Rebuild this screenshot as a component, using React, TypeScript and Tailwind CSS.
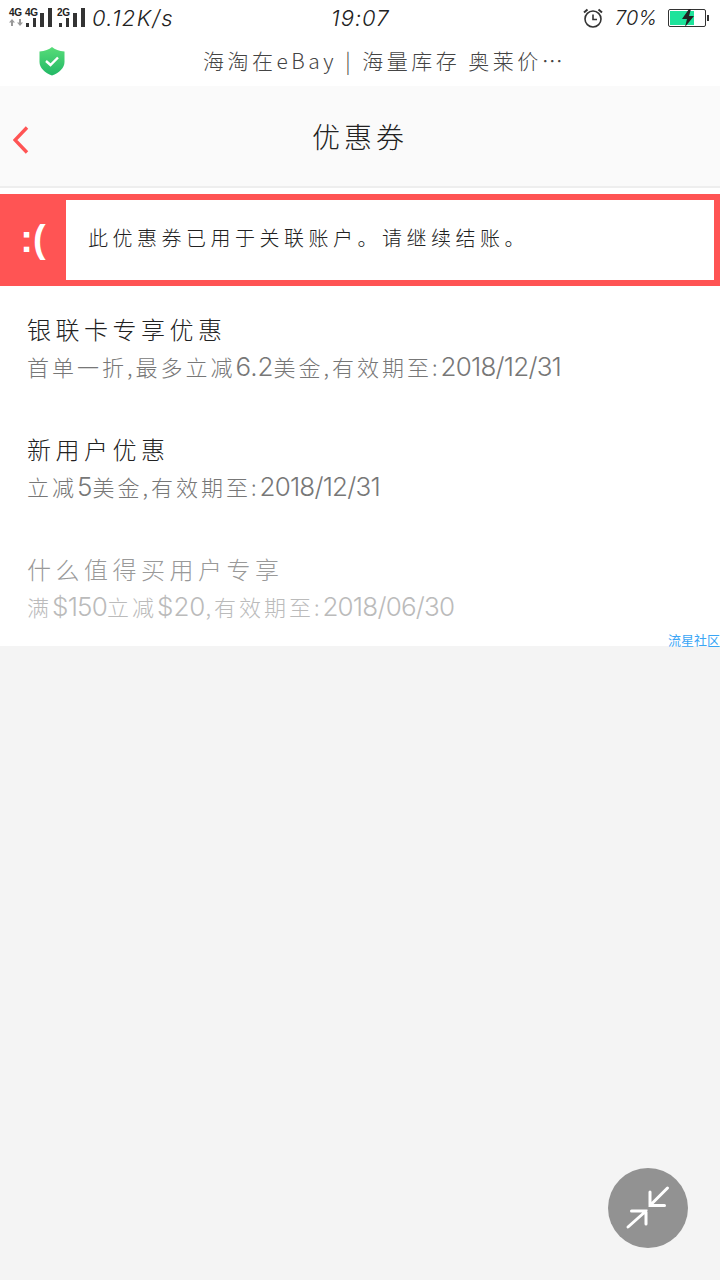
const cjk = "font-['Noto_Sans_CJK_SC','Noto_Sans',sans-serif]";
const thin = "font-['Inter','Liberation_Sans',sans-serif] font-light italic";

const Num = ({ children }: { children: string }) => (
  <span className={`font-['Inter',sans-serif] text-[26px] font-[350] ${children.includes('1') ? 'tracking-[-0.8px]' : 'tracking-[0px]'}`}>
    {children}
  </span>
);

const NetLabel = ({ children, className }: { children: string; className: string }) => (
  <span className={`absolute top-[7px] font-['Liberation_Sans',sans-serif] text-[10px] font-bold leading-[12px] tracking-[-0.2px] ${className}`}>{children}</span>
);

const SignalBars = () => (
  <div className="flex h-[19px] w-[26px] items-end justify-between">
    <span className="h-[4px] w-[3px] bg-[#333]" />
    <span className="h-[9px] w-[3px] bg-[#333]" />
    <span className="h-[14px] w-[4px] bg-[#333]" />
    <span className="h-[19px] w-[4px] bg-[#333]" />
  </div>
);

const StatusBar = () => (
  <div className="relative flex h-[36px] items-center bg-white pl-[9px] pr-[11px] text-[#222]">
    <NetLabel className="left-[9px]">4G</NetLabel>
    <svg className="absolute left-[9px] top-[19px]" width="14" height="7" viewBox="0 0 14 7" fill="#999">
      <path d="M3 0L6 3.500H4V7H2V3.500H0Z" />
      <path d="M11 7L8 3.500H10V0H12V3.500H14Z" />
    </svg>
    <div className="ml-[17px] mt-[-1px]"><SignalBars /></div>
    <NetLabel className="left-[25px]">4G</NetLabel>
    <div className="ml-[7px] mt-[-1px]"><SignalBars /></div>
    <NetLabel className="left-[57px]">2G</NetLabel>
    <span className={`${thin} ml-[7px] text-[22px] tracking-[1.300px]`}>0.12K/s</span>
    <span className={`${thin} absolute left-[331px] top-[2px] text-[22px] tracking-[1px]`}>19:07</span>
    <div className="ml-auto flex items-center">
      <svg width="22" height="22" viewBox="0 0 22 22" fill="none" stroke="#333" strokeWidth="1.600">
        <circle cx="11" cy="12" r="8" />
        <path d="M11 7.500V12.500H15" />
        <path d="M2 5.500L5.500 2.500M20 5.500L16.500 2.500" strokeWidth="2" />
      </svg>
      <span className={`${thin} ml-[11px] mr-[11px] text-[20px]`}>70%</span>
      <div className="flex h-[18px] w-[38px] items-center rounded-[2px] border border-[#333] p-[1px]">
        <div className="relative h-[14px] w-[24px] bg-[#1ee39b]">
          <svg className="absolute left-[11px] top-[-2px]" width="14" height="18" viewBox="0 0 14 18">
            <path d="M8 0L1 10H6L4 18L13 7H8L10 0Z" fill="#222" />
          </svg>
        </div>
      </div>
      <span className="ml-[1px] h-[6px] w-[2px] bg-[#333]" />
    </div>
  </div>
);

const AdBar = () => (
  <div className="flex h-[50px] items-center bg-white">
    <svg className="ml-[39px]" width="26" height="29" viewBox="0 0 26 29">
      <defs>
        <linearGradient id="shield" x1="0" y1="0" x2="0" y2="1">
          <stop offset="0" stopColor="#57dc78" />
          <stop offset="1" stopColor="#22b866" />
        </linearGradient>
      </defs>
      <path d="M13 0C16 2.500 20 4 25.500 4.500V15C25.500 21 20 26 13 28.500C6 26 0.500 21 0.500 15V4.500C6 4 10 2.500 13 0Z" fill="url(#shield)" />
      <path d="M7 14L11.500 18L19 10.500" fill="none" stroke="#fff" strokeWidth="2.400" />
    </svg>
    <span className={`${cjk} ml-[138px] whitespace-nowrap text-[21px] font-light tracking-[3.500px] text-[#444]`}>
      海淘在eBay | 海量库存 奥莱价…
    </span>
  </div>
);

const NavBar = () => (
  <div className="relative flex h-[102px] items-center justify-center border-b-2 border-[#eeeeee] bg-[#fafafa]">
    <svg className="absolute left-[13px] top-[40px]" width="16" height="28" viewBox="0 0 16 28" fill="none" stroke="#ff5454" strokeWidth="3.400">
      <path d="M14 1.500L2 14L14 26.500" />
    </svg>
    <h1 className={`${cjk} text-[28px] font-light tracking-[4px] text-[#222]`}>优惠券</h1>
  </div>
);

const ErrorBanner = () => (
  <div className="flex h-[92px] bg-[#ff5454] py-[6px] pr-[6px]">
    <div className="flex w-[66px] items-center justify-center pb-[2px] font-['Liberation_Sans',sans-serif] text-[38px] font-bold text-white">
      :(
    </div>
    <div className="flex flex-1 items-center bg-white pb-[4px] pl-[22px]">
      <span className={`${cjk} whitespace-nowrap text-[20px] font-light tracking-[4.500px] text-[#222]`}>
        此优惠券已用于关联账户。请继续结账。
      </span>
    </div>
  </div>
);

const coupons = [
  {
    title: '银联卡专享优惠',
    detail: ['首单一折,最多立减', '6.2', '美金,有效期至:', '2018/12/31'],
    titleColor: 'text-[#222]',
    detailColor: 'text-[#777]',
  },
  {
    title: '新用户优惠',
    detail: ['立减', '5', '美金,有效期至:', '2018/12/31'],
    titleColor: 'text-[#222]',
    detailColor: 'text-[#777]',
  },
  {
    title: '什么值得买用户专享',
    detail: ['满', '$150', '立减', '$20', ',有效期至:', '2018/06/30'],
    titleColor: 'text-[#999]',
    detailColor: 'text-[#bbb]',
  },
];

const CouponList = () => (
  <div className="relative flex h-[360px] flex-col gap-[40px] bg-white pl-[27px] pt-[23px]">
    {coupons.map(c => (
      <div key={c.title} className="shrink-0">
        <div className={`${cjk} h-[40px] text-[24px] font-light leading-[40px] tracking-[4.500px] ${c.titleColor}`}>{c.title}</div>
        <div className={`${cjk} h-[40px] whitespace-nowrap text-[22px] font-light leading-[34px] tracking-[3px] ${c.detailColor}`}>
          {c.detail.map((part, i) => (/^[\d$.\/]+$/.test(part) ? <Num key={i}>{part}</Num> : <span key={i}>{part}</span>))}
        </div>
      </div>
    ))}
    <span className={`${cjk} absolute bottom-[-3px] right-0 text-[13px] leading-[18px] text-[#3aa5f5]`}>流星社区</span>
  </div>
);

export default function App() {
  return (
    <div className="relative h-[1280px] w-[720px] overflow-hidden bg-[#f4f4f4]">
      <StatusBar />
      <AdBar />
      <NavBar />
      <div className="bg-white pt-[6px]">
        <ErrorBanner />
        <CouponList />
      </div>
      <button className="absolute left-[608px] top-[1168px] flex h-[80px] w-[80px] items-center justify-center rounded-full bg-[#929292]">
        <svg width="48" height="48" viewBox="0 0 48 48" fill="none" stroke="#fff" strokeWidth="3" strokeLinecap="round">
          <path d="M43.500 4L26 21.500M26 8V21.500H40.500" />
          <path d="M4 43L22 27M7.500 27H22V40" />
        </svg>
      </button>
    </div>
  );
}
